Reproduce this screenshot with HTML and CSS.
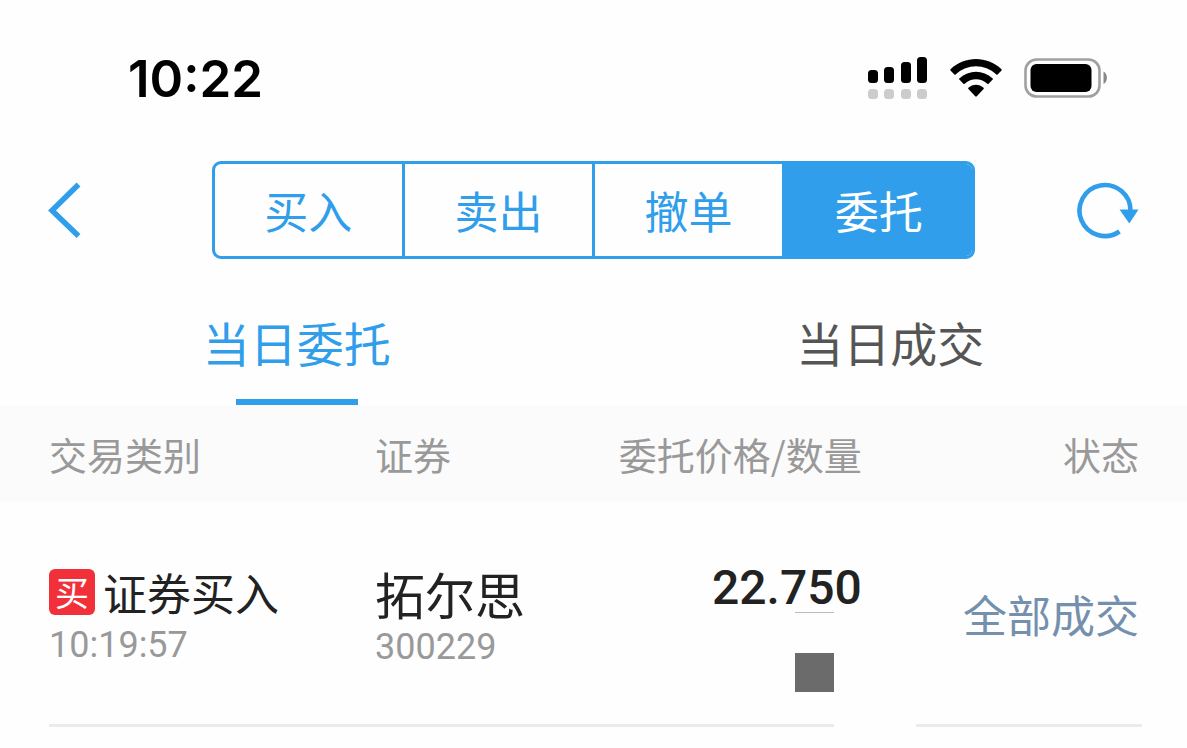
FILE: index.html
```html
<!DOCTYPE html>
<html lang="zh-CN">
<head>
<meta charset="utf-8">
<meta name="viewport" content="width=device-width, initial-scale=1">
<title>当日委托</title>
<link rel="stylesheet" href="styles.css">
</head>
<body>
<div class="status-bar">
  <time class="clock">10:22</time>
  <div class="status-icons">
    <svg width="62" height="44" viewBox="0 0 62 44" aria-hidden="true">
      <g fill="#000">
        <rect x="2" y="14" width="10" height="13" rx="3.500"/>
        <rect x="18" y="11" width="10" height="16" rx="3.500"/>
        <rect x="35" y="6" width="10" height="21" rx="3.500"/>
        <rect x="51" y="1" width="10" height="26" rx="3.500"/>
      </g>
      <g fill="#ccc">
        <rect x="2" y="33" width="10" height="10" rx="3.500"/>
        <rect x="18" y="33" width="10" height="10" rx="3.500"/>
        <rect x="35" y="33" width="10" height="10" rx="3.500"/>
        <rect x="51" y="33" width="10" height="10" rx="3.500"/>
      </g>
    </svg>
    <svg width="52" height="44" viewBox="0 0 52 44" aria-hidden="true">
      <path d="M0.5 13.2C15 -0.4 37 -0.4 51.5 13.2Q52 13.8 51.5 14.4L47.6 18.4Q47 19 46.3 18.4C34.5 7.6 17.5 7.6 5.7 18.4Q5 19 4.4 18.4L0.5 14.4Q0 13.8 0.5 13.2Z"/>
      <path d="M9.3 22.4C19 13.6 33 13.6 42.7 22.4Q43.3 23 42.7 23.6L38.6 27.7Q38 28.2 37.3 27.7C30.5 21.8 21.5 21.8 14.7 27.7Q14 28.2 13.4 27.7L9.3 23.6Q8.7 23 9.3 22.4Z"/>
      <path d="M18.4 31.7C22.8 27.7 29.2 27.7 33.6 31.7Q34.2 32.3 33.6 32.9L26.8 40.2Q26 41 25.2 40.2L18.4 32.9Q17.8 32.3 18.4 31.7Z"/>
    </svg>
    <svg width="84" height="44" viewBox="0 0 84 44" aria-hidden="true">
      <rect x="1.5" y="3.5" width="74" height="37" rx="11" fill="none" stroke="#a0a0a0" stroke-width="2.6"/>
      <rect x="6.500" y="8" width="61" height="28" rx="6"/>
      <path d="M79.500 15.500C84 17.500 84 26 79.500 28Z" fill="#888"/>
    </svg>
  </div>
</div>

<header class="nav">
  <button class="icon-button" type="button" aria-label="返回">
    <svg width="34" height="58" viewBox="0 0 34 58"><path d="M30.500 3.500L4 29.500L30.500 55" fill="none" stroke="#309eeb" stroke-width="5.500"/></svg>
  </button>
  <nav class="segments">
    <button class="segment" type="button">买入</button>
    <button class="segment" type="button">卖出</button>
    <button class="segment" type="button">撤单</button>
    <button class="segment active" type="button">委托</button>
  </nav>
  <button class="icon-button" type="button" aria-label="刷新">
    <svg width="62" height="58" viewBox="0 0 62 58"><path d="M42.500 50.500A25.500 25.500 0 1 1 53.500 30" fill="none" stroke="#309eeb" stroke-width="4.600"/><path d="M42.500 28.500H61.500L52.300 42.500Z" fill="#309eeb"/></svg>
  </button>
</header>

<nav class="tabs">
  <button class="tab active" type="button">当日委托</button>
  <button class="tab" type="button">当日成交</button>
</nav>

<main>
  <table class="orders">
    <colgroup><col class="col-type"><col class="col-name"><col class="col-price"><col class="col-state"></colgroup>
    <thead>
      <tr><th>交易类别</th><th>证券</th><th class="end">委托价格/数量</th><th class="end">状态</th></tr>
    </thead>
    <tbody>
      <tr>
        <td>
          <div class="kind"><span class="badge">买</span><span>证券买入</span></div>
          <div class="meta">10:19:57</div>
        </td>
        <td>
          <div class="stock">拓尔思</div>
          <div class="meta">300229</div>
        </td>
        <td class="end">
          <div class="price">22.750</div>
          <div class="quantity"><div class="mask"></div></div>
        </td>
        <td class="end state">全部成交</td>
      </tr>
    </tbody>
  </table>
  <div class="dividers"><hr class="rule wide"><hr class="rule narrow"></div>
</main>
</body>
</html>
```
FILE: styles.css
```css
* {
  box-sizing: border-box;
}

body {
  margin: 0;
  background: #fefefe;
  color: #222;
  font-family: "Noto Sans CJK SC", sans-serif;
}

button {
  margin: 0;
  padding: 0;
  border: 0;
  background: none;
  font-family: inherit;
  cursor: pointer;
}

svg {
  display: block;
}

.status-bar {
  display: flex;
  align-items: center;
  justify-content: space-between;
  height: 156px;
  padding: 0 79px 0 128px;
}

.clock {
  padding-top: 2px;
  color: #000;
  font: 600 51px/60px Inter, sans-serif;
}

.status-icons {
  display: flex;
  gap: 22px;
}

.nav {
  display: flex;
  align-items: center;
  justify-content: space-between;
  height: 108px;
  padding: 0 48px;
}

.segments {
  display: flex;
  width: 70%;
  height: 98px;
  margin-left: 28px;
  border: 3px solid #309eeb;
  border-radius: 9px;
  overflow: hidden;
}

.segment {
  flex: 1;
  color: #309eeb;
  font-size: 44px;
}

.segment + .segment {
  border-left: 3px solid #309eeb;
}

.segment.active {
  background: #309eeb;
  color: #fff;
}

.tabs {
  display: flex;
  justify-content: space-around;
  height: 141px;
}

.tab {
  display: flex;
  flex-direction: column;
  align-items: center;
  justify-content: space-between;
  padding-top: 43px;
  color: #555;
  font-size: 47px;
  line-height: 70px;
}

.tab.active {
  color: #309eeb;
}

.tab.active::after {
  content: "";
  width: 122px;
  height: 6px;
  background: #309eeb;
}

.orders {
  width: 100%;
  border-collapse: collapse;
  table-layout: fixed;
}

.col-type {
  width: 31.600%;
}

.col-name {
  width: 16%;
}

.col-price {
  width: 25%;
}

th,
td {
  padding: 0;
  text-align: left;
  vertical-align: top;
  white-space: nowrap;
}

th:first-child,
td:first-child {
  padding-left: 49px;
}

th:last-child,
td:last-child {
  padding-right: 48px;
}

.end {
  text-align: right;
}

thead {
  background: #fbfbfb;
  color: #999;
}

th {
  height: 97px;
  padding-top: 21px;
  font-size: 38px;
  font-weight: 400;
  line-height: 56px;
}

td {
  height: 222px;
  padding-top: 58px;
}

.kind {
  display: flex;
  align-items: center;
  gap: 8px;
  height: 64px;
  font-size: 44px;
  line-height: 64px;
}

.badge {
  width: 46px;
  height: 46px;
  border-radius: 6px;
  background: #f2303a;
  color: #fff;
  font-size: 34px;
  line-height: 46px;
  text-align: center;
}

.meta {
  color: #999;
  font: 400 36px/42px Roboto, sans-serif;
}

.stock {
  font-size: 50px;
  line-height: 66px;
}

.price {
  padding-top: 4px;
  font: 500 48px/48px Roboto, sans-serif;
}

.quantity {
  width: 39px;
  margin-left: auto;
  margin-right: 28px;
  padding-top: 40px;
  border-top: 1px solid #bbb;
}

.mask {
  height: 39px;
  background: #6b6b6b;
}

.state {
  padding-top: 79px;
  color: #7590ad;
  font-size: 44px;
  line-height: 66px;
}

.dividers {
  display: flex;
  gap: 82px;
  padding: 0 45px 0 49px;
}

.rule {
  height: 3px;
  margin: 0;
  border: 0;
  background: #ebebeb;
}

.wide {
  flex: 785;
}

.narrow {
  flex: 226;
}
```
